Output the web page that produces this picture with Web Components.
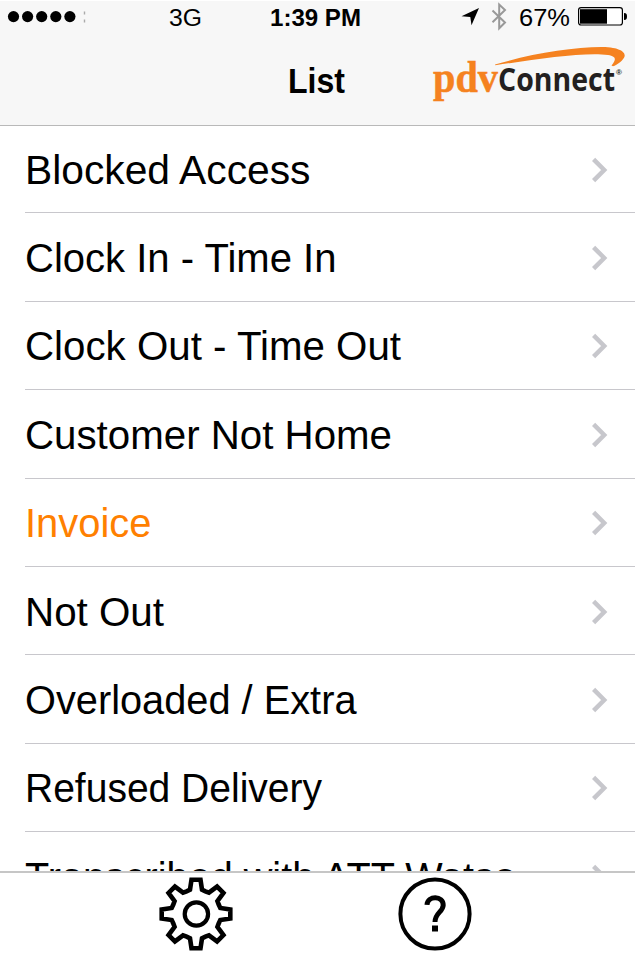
<!DOCTYPE html>
<html lang="en">
<head>
<meta charset="utf-8">
<title>List</title>
<style>
html,body{margin:0;height:100%;background:#fff;overflow:hidden}
body{font-family:"Liberation Sans",Arial,sans-serif;color:#000}
</style>
</head>
<body>
<pdv-screen></pdv-screen>
<script>
function define(name, markup) {
  customElements.define(name, class extends HTMLElement {
    connectedCallback() {
      if (this.shadowRoot) return;
      const t = document.createElement('template');
      t.innerHTML = typeof markup === 'function' ? markup(this) : markup;
      this.attachShadow({ mode: 'open' }).append(t.content.cloneNode(true));
    }
  });
}

// Single-line label fitted to a known advance width.
define('fit-text', el => {
  const a = n => el.getAttribute(n);
  return `<style>:host{display:block}svg{display:block;overflow:visible}text{font-family:inherit;white-space:pre}</style>
  <svg width="${a('w')}" height="${a('size')}"><text x="0" y="${a('size') * .86}" fill="currentColor" font-size="${a('size')}" font-weight="${a('weight') || 400}" textLength="${a('w')}" lengthAdjust="spacingAndGlyphs">${el.getAttribute('label')}</text></svg>`;
});

define('status-bar', `<style>
  :host{display:grid;grid-template-columns:169px 101px 190px 1fr;height:32px;align-items:center}
  .right{display:flex;align-items:center}
  svg{display:block}
  </style>
  <svg width="90" height="32"><g><circle cx="13.5" cy="15.6" r="5.6"/><circle cx="27.6" cy="15.6" r="5.6"/><circle cx="41.7" cy="15.6" r="5.6"/><circle cx="55.8" cy="15.6" r="5.6"/><circle cx="69.9" cy="15.6" r="5.6"/></g><path d="M84.5 10.5v3M84.5 18.5v3" stroke="#aaa" stroke-width="1.4"/></svg>
  <fit-text label="3G" size="23" w="33"></fit-text>
  <fit-text label="1:39 PM" size="23" w="91" weight="700"></fit-text>
  <div class="right">
    <svg width="59" height="32" viewBox="460 1 59 32"><path d="M479 8 461.5 16.3 470.3 16.9 471.5 25.3Z"/><path d="M492.5 10.5 505 22.5 499.2 28.3V4.5L505 10 492.5 22.2" fill="none" stroke="#999" stroke-width="2"/></svg>
    <fit-text label="67%" size="23" w="51"></fit-text>
    <svg width="60" height="32" viewBox="570 1 60 32"><rect x="578.6" y="7.6" width="43.8" height="17.4" rx="2.5" fill="#fff" stroke="#000" stroke-width="1.2"/><path d="M580 9.2h27v14.5h-27z"/><path d="M624 13c2.6 0 3 1.5 3 3.5s-.4 3.5-3 3.5z"/></svg>
  </div>`);

define('pdv-logo', `<style>:host{display:block}svg{display:block;font-family:"Liberation Serif",serif;font-weight:700}
  .c{font-family:"Open Sans","Noto Sans",sans-serif}</style>
  <svg width="202" height="68" viewBox="425 40 202 68">
  <path d="M495 64.6C530 54 573 47 602 47.1C620 47.5 625 52 624.7 56C624 60 617 65 613 66.3L611.5 65.6C616 60 617 56.5 608 55C584 52 537 59 495.3 65.3Z" fill="#f58220"/>
  <text x="433" y="92" font-size="45" fill="#f58220" stroke="#f58220" stroke-width=".5" textLength="65" lengthAdjust="spacingAndGlyphs">pdv</text>
  <text class="c" y="91" fill="#231f20"><tspan x="498" font-size="31.5" textLength="117" lengthAdjust="spacingAndGlyphs">Connect</tspan><tspan x="616" y="74.5" font-size="8" font-family="Liberation Sans">®</tspan></text></svg>`);

define('nav-header', `<style>
  :host{display:block;box-sizing:border-box;height:125px;background:#f7f7f7;margin-top:1px;border-bottom:1px solid #b9b9b9}
  .bar{display:grid;grid-template-columns:288px 137px 1fr;align-items:start}
  fit-text{padding-top:30px}
  pdv-logo{padding-top:7px}
  </style><status-bar></status-bar>
  <div class="bar"><span></span><fit-text label="List" size="34.5" w="57" weight="700"></fit-text><pdv-logo></pdv-logo></div>`);

define('list-row', `<style>
  :host{display:flex;box-sizing:border-box;flex:0 0 88.4px;margin-left:25px;padding:1.8px 26px 0 0;align-items:center;justify-content:space-between;border-bottom:1px solid #c8c7cc}
  :host(:first-child){flex-basis:87.4px}
  svg{display:block}
  </style><slot></slot>
  <svg width="19" height="28" viewBox="0 0 19 28"><path d="M3.6 3.3 14.2 14 3.6 24.7" fill="none" stroke="#c7c7cc" stroke-width="4.5"/></svg>`);

define('item-list', `<style>:host{display:flex;flex-direction:column;height:745px;overflow:hidden}</style><slot></slot>`);

// Outline of an eight-toothed cog centred on the origin.
function cogPath() {
  const p = [];
  for (let i = 0; i < 8; i++) {
    const r = i * Math.PI / 4;
    for (const [x, y] of [[-6, -24.3], [-4.5, -34.3], [4.5, -34.3], [6, -24.3], [9.4, -22.7]])
      p.push((x * Math.cos(r) - y * Math.sin(r)).toFixed(2) + ' ' + (x * Math.sin(r) + y * Math.cos(r)).toFixed(2));
  }
  return 'M' + p.join('L') + 'Z';
}

define('tool-bar', () => `<style>
  :host{display:grid;grid-template-columns:158px 238px 1fr;border-top:2px solid #c6c6c6;height:87px;box-sizing:border-box;background:#fff}
  svg{display:block;margin-top:2.5px}
  </style><span></span>
  <svg width="76" height="76" viewBox="-38 -38 76 76"><path d="${cogPath()}" fill="none" stroke="#000" stroke-width="4.6"/><circle cx=".4" cy="0" r="11.7" fill="none" stroke="#000" stroke-width="4.2"/></svg>
  <svg width="78" height="76" viewBox="-39 -38 78 76"><circle r="34.6" fill="none" stroke="#000" stroke-width="4"/><path d="M-8 -9.2C-7.5 -18.8 8.4 -18.8 8.2 -8.8C8 -2 0 -1.2 0 8" fill="none" stroke="#000" stroke-width="5"/><path d="M-3 11.5H3V17.5H-3Z"/></svg>`);

const rows = [
  ['Blocked Access', 285.5], ['Clock In - Time In', 311.5], ['Clock Out - Time Out', 376],
  ['Customer Not Home', 367], ['Invoice', 126.5, '#ff8000'], ['Not Out', 139],
  ['Overloaded / Extra', 331.5], ['Refused Delivery', 297], ['Transcribed with ATT Watso...', 524]
];
define('pdv-screen', () => `<style>
  :host{display:block;width:635px;height:960px;overflow:hidden;background:#fff}
  :host::before{content:"";display:table}
  </style><nav-header></nav-header>
  <item-list>${rows.map(([t, w, c]) => `<list-row style="color:${c || '#000'}"><fit-text label="${t}" size="40" w="${w}"></fit-text></list-row>`).join('')}</item-list>
  <tool-bar></tool-bar>`);
</script>
</body>
</html>
